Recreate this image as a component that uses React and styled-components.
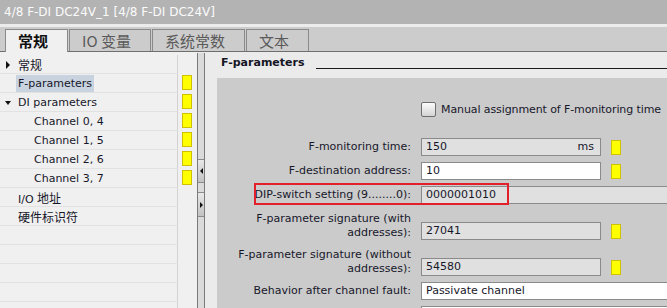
import React from 'react';
import styled, { createGlobalStyle } from 'styled-components';

const UI = `"DejaVu Sans", "Noto Sans CJK SC", sans-serif`;
const CJK = `"Noto Sans CJK SC", "DejaVu Sans", sans-serif`;

const GlobalStyle = createGlobalStyle`
  html, body { margin: 0; padding: 0; background: #ebebeb; }
  body { font-family: ${UI}; }
`;

const Window = styled.div`
  width: 667px;
  height: 308px;
  overflow: hidden;
  display: flex;
  flex-direction: column;
  background: #ebebeb;
  font-family: ${UI};
  color: #17172a;
`;

const TitleBar = styled.div`
  flex: none;
  height: 24px;
  background: #b3b3b3;
  border-bottom: 3px solid #ececec;
  color: #fbfbfb;
  font-size: 12px;
  line-height: 24px;
  padding-left: 4px;
  white-space: nowrap;
`;

const TabBar = styled.div`
  flex: none;
  height: 24px;
  background: #cccccc;
  border-bottom: 1px solid #6f6f6f;
  display: flex;
  align-items: flex-end;
  padding-left: 5px;
  gap: 1px;
`;

const Tab = styled.div`
  box-sizing: border-box;
  height: ${(p) => (p.$active ? 23 : 22)}px;
  margin-bottom: ${(p) => (p.$active ? -1 : 0)}px;
  padding: 0 19px 0 12px;
  border: 1px solid #8a8a8a;
  border-bottom: none;
  background: ${(p) => (p.$active ? '#f0f0f0' : '#cccccc')};
  color: ${(p) => (p.$active ? '#111111' : '#5a5a5a')};
  font-family: ${CJK};
  font-size: 15px;
  font-weight: ${(p) => (p.$active ? 700 : 400)};
  line-height: 21px;
  white-space: nowrap;
  position: relative;
  z-index: 1;
`;

const Body = styled.div`
  flex: 1;
  min-height: 0;
  display: flex;
`;

const TreePane = styled.div`
  flex: none;
  width: 197px;
  background: #f0f0f0;
  padding-top: 3px;
  overflow: hidden;
`;

const TreeRow = styled.div`
  display: grid;
  grid-template-columns: 178px 19px;
  height: 19px;
`;

const NameCell = styled.div`
  box-sizing: border-box;
  border-bottom: 1px solid #e2e2e2;
  border-right: 1px solid #d2d2d2;
  display: flex;
  align-items: flex-start;
  padding-left: ${(p) => p.$indent}px;
  font-size: 11px;
  white-space: nowrap;
`;

const Caret = styled.span`
  flex: none;
  width: 13px;
  height: 17px;
  margin-top: 1px;
  display: flex;
  align-items: center;
  &::before {
    content: '';
    display: block;
    ${(p) =>
      p.$open
        ? `border-left: 3.5px solid transparent; border-right: 3.5px solid transparent; border-top: 4px solid #111; margin-left: 0;`
        : `border-top: 4px solid transparent; border-bottom: 4px solid transparent; border-left: 4px solid #111; margin-left: 1px;`}
  }
`;

const NodeLabel = styled.span`
  height: 17px;
  margin-top: 1px;
  line-height: 17px;
  padding: 0 2px;
  margin-left: -2px;
  background: ${(p) => (p.$selected ? '#c8d3df' : 'transparent')};
`;

const Cjk = styled.span`
  font-family: ${CJK};
  font-size: 12px;
`;

const StatusCell = styled.div`
  display: flex;
  align-items: flex-start;
  padding: 1px 0 0 4px;
`;

const YellowMark = styled.span`
  display: block;
  box-sizing: border-box;
  width: 10px;
  height: 15px;
  background: #ffff00;
  border: 1px solid #cfc000;
`;

const Splitter = styled.div`
  flex: none;
  box-sizing: border-box;
  width: 8px;
  margin-top: 1px;
  border-left: 1px solid #7b7b7b;
  border-right: 1px solid #7b7b7b;
  background: #dadada;
  display: flex;
  flex-direction: column;
  padding-top: 106px;
  gap: 9px;
`;

const SplitButton = styled.div`
  height: ${(p) => p.$h}px;
  box-sizing: border-box;
  border-top: 1px solid #8c8c8c;
  border-bottom: 1px solid #8c8c8c;
  background: linear-gradient(#e8e8e8, #c2c2c2);
  display: flex;
  align-items: center;
  justify-content: center;
  &::before {
    content: '';
    display: block;
    border-top: 3px solid transparent;
    border-bottom: 3px solid transparent;
    ${(p) => (p.$dir === 'left' ? 'border-right: 3px solid #111;' : 'border-left: 3px solid #111;')}
  }
`;

const RightPane = styled.div`
  flex: 1;
  min-width: 0;
  display: flex;
  flex-direction: column;
  padding-left: 12px;
`;

const PaneHeader = styled.div`
  flex: none;
  box-sizing: border-box;
  height: 26px;
  padding-top: 3px;
  display: flex;
  align-items: flex-start;
`;

const HeaderTitle = styled.span`
  padding-left: 4px;
  font-size: 11px;
  font-weight: 700;
  line-height: 16px;
  color: #151525;
  white-space: nowrap;
`;

const HeaderRule = styled.span`
  flex: 1;
  height: 1px;
  margin: 13px 0 0 11px;
  background: #1b1b1b;
`;

const GrayPanel = styled.div`
  flex: 1;
  background: #cbcbcb;
  padding-top: 19px;
  overflow: hidden;
`;

const CheckRow = styled.div`
  height: 24px;
  display: flex;
  align-items: center;
  gap: 5px;
  padding-left: 204px;
  margin-bottom: 14px;
  font-size: 11px;
  letter-spacing: -0.1px;
  white-space: nowrap;
`;

const CheckBox = styled.span`
  flex: none;
  box-sizing: border-box;
  width: 15px;
  height: 15px;
  border: 1px solid #6e6e6e;
  border-radius: 2px;
  background: linear-gradient(#fbfbfb, #d4d4d4);
`;

const FieldRow = styled.div`
  position: relative;
  box-sizing: border-box;
  display: grid;
  grid-template-columns: 194px max-content;
  column-gap: 10px;
  height: ${(p) => (p.$tall ? 36 : 24)}px;
  align-items: ${(p) => (p.$tall ? 'end' : 'center')};
  padding-bottom: ${(p) => (p.$tall ? 3 : 0)}px;
`;

const Label = styled.div`
  text-align: right;
  font-size: 11px;
  line-height: 14px;
  white-space: nowrap;
`;

const FieldGroup = styled.div`
  display: flex;
  align-items: center;
  gap: 10px;
`;

const Input = styled.div`
  box-sizing: border-box;
  width: ${(p) => (p.$wide ? 300 : 180)}px;
  height: 18px;
  border: 1px solid #8a8a8a;
  background: ${(p) => (p.$editable ? '#ffffff' : '#e0e0e0')};
  padding: 0 6px 0 4px;
  display: flex;
  justify-content: space-between;
  font-size: 11px;
  line-height: 16px;
  white-space: nowrap;
  color: #17172a;
`;

const Annotation = styled.div`
  position: absolute;
  left: 37px;
  top: 0;
  width: 255px;
  height: 22px;
  box-sizing: border-box;
  border: 2px solid #e3202a;
  pointer-events: none;
`;

const tree = [
  { key: 'g', label: <Cjk>常规</Cjk>, indent: 5, caret: 'closed' },
  { key: 'f', label: 'F-parameters', indent: 18, selected: true, mark: true },
  { key: 'di', label: 'DI parameters', indent: 5, caret: 'open', mark: true },
  { key: 'c0', label: 'Channel 0, 4', indent: 34, mark: true },
  { key: 'c1', label: 'Channel 1, 5', indent: 34, mark: true },
  { key: 'c2', label: 'Channel 2, 6', indent: 34, mark: true },
  { key: 'c3', label: 'Channel 3, 7', indent: 34, mark: true },
  { key: 'io', label: <>I/O <Cjk>地址</Cjk></>, indent: 18 },
  { key: 'hw', label: <Cjk>硬件标识符</Cjk>, indent: 18 },
  { key: 'e1', indent: 18 },
  { key: 'e2', indent: 18 },
  { key: 'e3', indent: 18 },
  { key: 'e4', indent: 18 },
  { key: 'e5', indent: 18 },
];

const tabs = [
  { label: '常规', active: true },
  { label: 'IO 变量' },
  { label: '系统常数' },
  { label: '文本' },
];

export default function App() {
  return (
    <>
      <GlobalStyle />
      <Window>
        <TitleBar>4/8 F-DI DC24V_1 [4/8 F-DI DC24V]</TitleBar>
        <TabBar>
          {tabs.map((t) => (
            <Tab key={t.label} $active={t.active}>
              {t.label}
            </Tab>
          ))}
        </TabBar>
        <Body>
          <TreePane>
            {tree.map((n) => (
              <TreeRow key={n.key}>
                <NameCell $indent={n.indent}>
                  {n.caret && <Caret $open={n.caret === 'open'} />}
                  {n.label && <NodeLabel $selected={n.selected}>{n.label}</NodeLabel>}
                </NameCell>
                <StatusCell>{n.mark && <YellowMark />}</StatusCell>
              </TreeRow>
            ))}
          </TreePane>
          <Splitter>
            <SplitButton $h={24} $dir="left" />
            <SplitButton $h={25} $dir="right" />
          </Splitter>
          <RightPane>
            <PaneHeader>
              <HeaderTitle>F-parameters</HeaderTitle>
              <HeaderRule />
            </PaneHeader>
            <GrayPanel>
              <CheckRow>
                <CheckBox />
                <span>Manual assignment of F-monitoring time</span>
              </CheckRow>
              <FieldRow>
                <Label>F-monitoring time:</Label>
                <FieldGroup>
                  <Input>
                    <span>150</span>
                    <span>ms</span>
                  </Input>
                  <YellowMark />
                </FieldGroup>
              </FieldRow>
              <FieldRow>
                <Label>F-destination address:</Label>
                <FieldGroup>
                  <Input $editable>10</Input>
                  <YellowMark />
                </FieldGroup>
              </FieldRow>
              <FieldRow>
                <Label>DIP-switch setting (9........0):</Label>
                <FieldGroup>
                  <Input $wide>0000001010</Input>
                </FieldGroup>
                <Annotation />
              </FieldRow>
              <FieldRow $tall>
                <Label>
                  F-parameter signature (with
                  <br />
                  addresses):
                </Label>
                <FieldGroup>
                  <Input>27041</Input>
                  <YellowMark />
                </FieldGroup>
              </FieldRow>
              <FieldRow $tall>
                <Label>
                  F-parameter signature (without
                  <br />
                  addresses):
                </Label>
                <FieldGroup>
                  <Input>54580</Input>
                  <YellowMark />
                </FieldGroup>
              </FieldRow>
              <FieldRow>
                <Label>Behavior after channel fault:</Label>
                <FieldGroup>
                  <Input $wide $editable>Passivate channel</Input>
                </FieldGroup>
              </FieldRow>
              <FieldRow>
                <Label />
                <FieldGroup>
                  <Input $wide $editable />
                </FieldGroup>
              </FieldRow>
            </GrayPanel>
          </RightPane>
        </Body>
      </Window>
    </>
  );
}
